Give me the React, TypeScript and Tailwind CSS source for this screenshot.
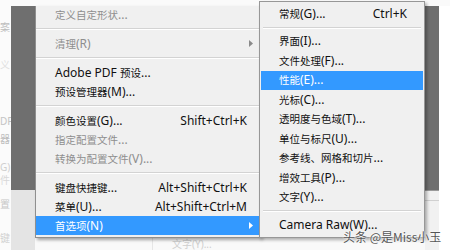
import React from 'react';

type Item = {
  label?: string;
  shortcut?: string;
  disabled?: boolean;
  arrow?: boolean;
  active?: boolean;
  sep?: boolean;
  first?: boolean;
};

const CJK = /([\u3000-\u303f\u4e00-\u9fff]+)/;

// CJK runs render a bit smaller than the Latin text, as in the original menu font
function Label({ text }: { text: string }) {
  return (
    <>
      {text.split(CJK).map((part, i) =>
        CJK.test(part) ? (
          <span key={i} className="text-[10.5px]">
            {part}
          </span>
        ) : (
          <React.Fragment key={i}>{part}</React.Fragment>
        )
      )}
    </>
  );
}

function Arrow({ white }: { white?: boolean }) {
  return (
    <svg width="4" height="7" viewBox="0 0 4 7" className="shrink-0">
      <polygon points="0,0 4,3.5 0,7" fill={white ? '#ffffff' : '#8a8a8a'} />
    </svg>
  );
}

const mainItems: Item[] = [
  { label: '定义自定形状...', disabled: true, first: true },
  { sep: true },
  { label: '清理(R)', disabled: true, arrow: true },
  { sep: true },
  { label: 'Adobe PDF 预设...' },
  { label: '预设管理器(M)...' },
  { sep: true },
  { label: '颜色设置(G)...', shortcut: 'Shift+Ctrl+K' },
  { label: '指定配置文件...', disabled: true },
  { label: '转换为配置文件(V)...', disabled: true },
  { sep: true },
  { label: '键盘快捷键...', shortcut: 'Alt+Shift+Ctrl+K' },
  { label: '菜单(U)...', shortcut: 'Alt+Shift+Ctrl+M' },
  { label: '首选项(N)', arrow: true, active: true },
];

const subItems: Item[] = [
  { label: '常规(G)...', shortcut: 'Ctrl+K' },
  { sep: true },
  { label: '界面(I)...' },
  { label: '文件处理(F)...' },
  { label: '性能(E)...', active: true },
  { label: '光标(C)...' },
  { label: '透明度与色域(T)...' },
  { label: '单位与标尺(U)...' },
  { label: '参考线、网格和切片...' },
  { label: '增效工具(P)...' },
  { label: '文字(Y)...' },
  { sep: true },
  { label: 'Camera Raw(W)...' },
];

function MainRow({ item }: { item: Item }) {
  if (item.sep) {
    return (
      <div className="h-[10px] flex flex-col justify-center">
        <div className="h-px bg-[#d3d3d3]" />
        <div className="h-px bg-white" />
      </div>
    );
  }
  return (
    <div
      className={`${item.first ? 'h-[18px]' : 'h-[19px]'} flex items-center pl-[19px] pr-[14px] whitespace-nowrap ${
        item.active ? 'bg-[#3399ff] text-white' : item.disabled ? 'text-[#8e8e8e]' : 'text-[#111]'
      }`}
    >
      <span className="flex-1">
        <Label text={item.label!} />
      </span>
      {item.shortcut && <span>{item.shortcut}</span>}
      {item.arrow && (
        <span className="mr-[-6px]">
          <Arrow white={item.active} />
        </span>
      )}
    </div>
  );
}

function SubRow({ item }: { item: Item }) {
  if (item.sep) {
    return (
      <div className="h-[8px] flex flex-col justify-center px-[2px]">
        <div className="h-px bg-[#d3d3d3]" />
        <div className="h-px bg-white" />
      </div>
    );
  }
  return (
    <div
      className={`h-[19.5px] flex items-center pl-[18px] pr-[16px] whitespace-nowrap ${
        item.active ? 'bg-[#3399ff] text-white' : 'text-[#111]'
      }`}
    >
      <span className="flex-1">
        <Label text={item.label!} />
      </span>
      {item.shortcut && <span>{item.shortcut}</span>}
    </div>
  );
}

// faint leftovers of a window behind the menu, along the left edge
const ghost = [
  { h: 21, t: '' },
  { h: 11, t: '案', c: 'text-[#bdbdbd]' },
  { h: 27, t: '' },
  { h: 11, t: '义', c: 'text-[#e0e0e0]' },
  { h: 45, t: '' },
  { h: 11, t: 'DF', c: 'text-[#c4c4c4] text-[8px]' },
  { h: 7, t: '' },
  { h: 11, t: '器', c: 'text-[#bdbdbd]' },
  { h: 18, t: '' },
  { h: 10, t: 'G)', c: 'text-[#cfcfcf] text-[8px]' },
  { h: 3, t: '' },
  { h: 10, t: '件', c: 'text-[#d8d8d8]' },
  { h: 13, t: '' },
  { h: 11, t: '置', c: 'text-[#c8c8c8]' },
  { h: 23, t: '' },
  { h: 11, t: '键', c: 'text-[#d2d2d2]' },
];

export default function App() {
  return (
    <div className="relative w-[450px] h-[250px] overflow-hidden bg-white text-[12px] leading-none font-['Noto_Sans','Noto_Sans_CJK_SC',sans-serif]">
      {/* underlying window */}
      <div className="flex h-full">
        <div className="w-[11px] h-full bg-[#fbfbfb] flex flex-col">
          {ghost.map((g, i) => (
            <div
              key={i}
              style={{ height: g.h }}
              className={`flex items-center justify-start text-[10px] ${g.c ?? ''}`}
            >
              {g.t}
            </div>
          ))}
        </div>
        <div className="flex-1 flex flex-col">
          <div className="h-[6px] bg-[#fafafa]" />
          <div className="h-[184px] bg-[#6f6f6f]" />
          <div className="flex-1 flex">
            <div className="w-[24px] bg-[#e4e4e4]" />
            <div className="flex-1 bg-[#f9f9f9] flex">
              <div className="w-[118px] border-r border-[#e6e6e6]" />
              <div className="pl-[19px] pt-[49px] text-[#cfcfcf] whitespace-nowrap text-[10px]">
                <span className="text-[10px]">文字</span>(Y)...
              </div>
            </div>
            <div className="w-[14px] bg-[#f1f1f1] flex flex-col">
              <div className="h-px bg-[#9a9a9a]" />
              <div className="h-[9px]" />
              <div className="h-px bg-[#d0d0d0]" />
            </div>
          </div>
        </div>
        <div className="w-[11px] h-full flex flex-col">
          <div className="h-[6px] bg-[#fafafa]" />
          <div className="flex-1 bg-white" />
        </div>
      </div>

      {/* main menu */}
      <div className="absolute left-[35px] top-[6px] w-[226px] bg-[#f0f0f0] border-l border-b border-[#8f8f8f] pb-[2px] shadow-[2px_2px_3px_rgba(0,0,0,0.35)]">
        {mainItems.map((it, i) => (
          <MainRow key={i} item={it} />
        ))}
      </div>

      {/* Preferences submenu */}
      <div className="absolute left-[259px] top-[1px] w-[166px] bg-[#f0f0f0] border border-[#979797] pt-[2px] pb-[2px] px-px shadow-[2px_2px_3px_rgba(0,0,0,0.3)]">
        {subItems.map((it, i) => (
          <SubRow key={i} item={it} />
        ))}
      </div>

      {/* watermark */}
      <div className="absolute left-[343px] top-[231px] text-[12px] text-[#555] whitespace-nowrap [text-shadow:0_0_2px_#fff,0_0_2px_#fff] font-['Noto_Sans_CJK_SC',sans-serif]">
        头条 @是Miss小玉
      </div>
    </div>
  );
}
